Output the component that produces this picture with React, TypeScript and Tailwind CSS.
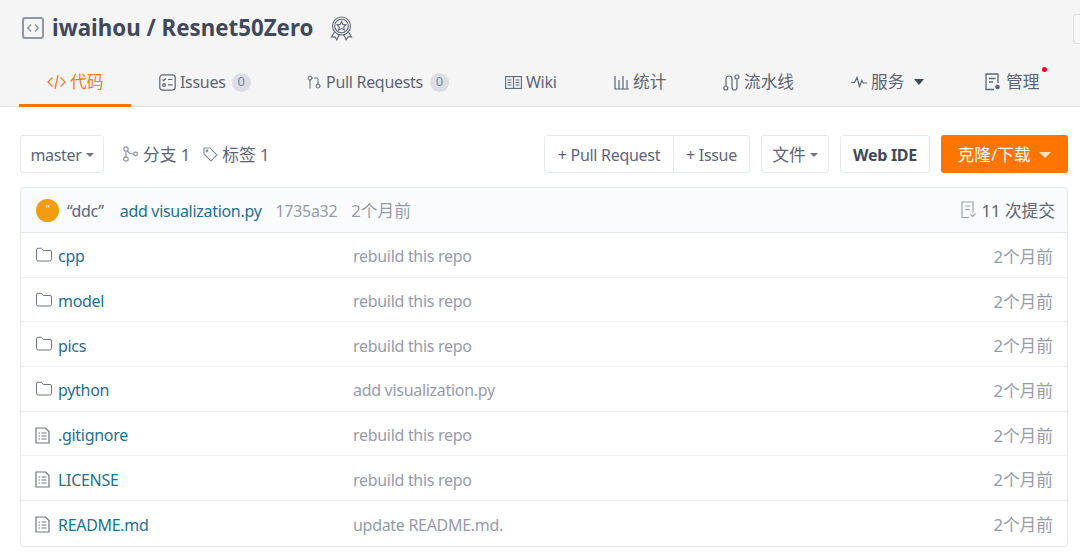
import React from 'react';
import { Folder, GitPullRequest } from 'lucide-react';

const base = "font-['Noto_Sans','Noto_Sans_CJK_SC',sans-serif]";

const Cn = ({ children }: { children: React.ReactNode }) => (
    <span className="text-[16.7px] tracking-normal whitespace-nowrap">{children}</span>
);

const RepoIcon = () => (
    <svg viewBox="0 0 22 22" className="w-[22px] h-[22px] text-[#8f96a6]" fill="none" stroke="currentColor">
        <rect x="1" y="1" width="20" height="20" rx="2" strokeWidth="2" />
        <path d="M9 7.500 5.800 11 9 14.500M13 7.500l3.200 3.500-3.200 3.500" strokeWidth="1.500" />
    </svg>
);

const BadgeIcon = () => (
    <svg viewBox="0 0 23 25" className="w-[23px] h-[25px] text-[#5e6577]" fill="none" stroke="currentColor" strokeWidth="1.100">
        <circle cx="11.500" cy="10" r="9" />
        <circle cx="11.500" cy="10" r="6.800" />
        <path d="M11.500 5.500l1.400 2.900 3.100.4-2.300 2.100.6 3.100-2.800-1.500-2.800 1.500.6-3.100-2.300-2.100 3.100-.4z" />
        <path d="M4.500 16 1.500 21l3.500-.2 1.800 3 2.500-5M18.500 16l3 5-3.500-.2-1.800 3-2.500-5" />
    </svg>
);

const CodeTabIcon = () => (
    <svg viewBox="0 0 19 16" className="w-[19px] h-[16px]" fill="none" stroke="currentColor" strokeWidth="1.300">
        <path d="M5.500 3.500 1 8l4.500 4.500M13.500 3.500 18 8l-4.500 4.500M11 1 8 15" />
    </svg>
);

const TaskIcon = () => (
    <svg viewBox="0 0 17 17" className="w-[17px] h-[17px]" fill="none" stroke="currentColor" strokeWidth="1.200">
        <rect x="0.800" y="0.800" width="15.400" height="15.400" rx="3" />
        <path d="M3.500 5.500l1.200 1.200 2-2.200M9 5.500h4.500M9 10.800h4.500" />
        <circle cx="5" cy="11" r="1.400" />
    </svg>
);

const BookIcon = () => (
    <svg viewBox="0 0 17 13" className="w-[17px] h-[13px]" fill="none" stroke="currentColor" strokeWidth="1.100">
        <rect x="0.600" y="0.600" width="15.800" height="11.800" />
        <path d="M8.500 1v11M2.500 4h4M2.500 6.500h4M2.500 9h4M10.500 4h4M10.500 6.500h4M10.500 9h4" />
    </svg>
);

const PipelineIcon = () => (
    <svg viewBox="0 0 17 17" className="w-[17px] h-[17px]" fill="none" stroke="currentColor" strokeWidth="1.200">
        <circle cx="2.800" cy="14" r="2" />
        <circle cx="14" cy="3" r="2" />
        <path d="M3 12V5a3 3 0 0 1 6 0v8.500a2.500 2.500 0 0 0 5 0V5.500" />
    </svg>
);

const PulseIcon = () => (
    <svg viewBox="0 0 16 12" className="w-[16px] h-[12px]" fill="none" stroke="currentColor" strokeWidth="1.200">
        <path d="M0 6.500h3.500L6 1.500l2.500 9 2.300-6 1.400 2.500H16" />
    </svg>
);

const StatsIcon = () => (
    <svg viewBox="0 0 15 15" className="w-[15px] h-[15px]" fill="none" stroke="currentColor" strokeWidth="1.200">
        <path d="M1 1v13h14M5 5v9M9 1v13M13 5v9" />
    </svg>
);

const ManageIcon = () => (
    <svg viewBox="0 0 16 18" className="w-[16px] h-[18px]" fill="none" stroke="currentColor" strokeWidth="1.300">
        <path d="M9 16.500H1V1h12v9" />
        <path d="M4 5.500h6.500M4 9h4" />
        <circle cx="12.500" cy="14" r="1.700" fill="currentColor" />
    </svg>
);

const BranchIcon = () => (
    <svg viewBox="0 0 15 16" className="w-[15px] h-[16px] text-[#8a90a0]" fill="none" stroke="currentColor" strokeWidth="1.200">
        <circle cx="3" cy="3" r="2.200" />
        <circle cx="3" cy="13" r="2.200" />
        <circle cx="12.500" cy="8" r="1.800" />
        <path d="M3 5.200v5.600M4.500 4.800C5.500 7 8 8 10.700 8" />
    </svg>
);

const TagIcon = () => (
    <svg viewBox="0 0 15 15" className="w-[15px] h-[15px] text-[#8a90a0]" fill="none" stroke="currentColor" strokeWidth="1.200">
        <path d="M1 1h6l7 7-6 6-7-7z" />
        <circle cx="4" cy="4" r="0.800" />
    </svg>
);

const FileIcon = () => (
    <svg viewBox="0 0 15 17" className="w-[15px] h-[17px] shrink-0" fill="none" stroke="#6f7480" strokeWidth="1.200">
        <path d="M1 1h9.500L14 4.500V16H1z" />
        <path d="M3.500 6h1.500M6.500 6h5M3.500 9h1.500M6.500 9h5M3.500 12h1.500M6.500 12h5" />
    </svg>
);

const CommitsIcon = () => (
    <svg viewBox="0 0 15 18" className="w-[15px] h-[18px]" fill="none" stroke="#9aa0ac" strokeWidth="1.200">
        <path d="M8 16.500H1V1h11v10.500" />
        <path d="M4 5h5M4 8.500h5" />
        <path d="M9.500 13.500l2 2 3-3" />
    </svg>
);

const Caret = ({ className }: { className: string }) => (
    <span className={`inline-block w-0 h-0 border-x-transparent border-b-0 ${className}`} />
);

const tabs = [
    { label: 'Issues', w: 'w-[147px]', icon: <TaskIcon />, count: 'ml-[2px]' },
    { label: 'Pull Requests', w: 'w-[199px]', icon: <GitPullRequest size={16} strokeWidth={1.500} />, count: 'ml-[3px]' },
    { label: 'Wiki', w: 'w-[109px]', icon: <BookIcon /> },
    { label: '统计', w: 'w-[109px]', icon: <StatsIcon />, cn: true },
    { label: '流水线', w: 'w-[128px]', icon: <PipelineIcon />, cn: true },
    { label: '服务', w: 'w-[134px]', icon: <PulseIcon />, cn: true, caret: true },
];

const rows = [
    { name: 'cpp', dir: true, msg: 'rebuild this repo' },
    { name: 'model', dir: true, msg: 'rebuild this repo' },
    { name: 'pics', dir: true, msg: 'rebuild this repo' },
    { name: 'python', dir: true, msg: 'add visualization.py' },
    { name: '.gitignore', dir: false, msg: 'rebuild this repo' },
    { name: 'LICENSE', dir: false, msg: 'rebuild this repo' },
    { name: 'README.md', dir: false, msg: 'update README.md.' },
];

export default function App() {
    return (
        <div className={`w-[1080px] h-[560px] overflow-hidden bg-white text-[16px] tracking-[-0.3px] ${base}`}>
            <div className="relative h-[107px] bg-[#f5f5f5] border-b border-[#e3e3e3]">
                <div className="flex items-center pl-[22px] pt-[17px] h-[39px] text-[#40485b]">
                    <RepoIcon />
                    <span className="ml-[8px] text-[22.300px] font-bold tracking-normal">iwaihou / Resnet50Zero</span>
                    <span className="ml-[17px]"><BadgeIcon /></span>
                </div>
                <div className="absolute right-[-8px] top-[14px] w-[15px] h-[30px] border border-[#dcdfe4] rounded-[3px] bg-[#f7f7f7]" />
                <div className="flex pl-[19px] pt-[24px] text-[#5e6577]">
                    <div className="w-[112px] h-[44px] pb-[3px] pl-[28px] flex items-center gap-[4px] text-[#fb7a27] border-b-[3px] border-[#ff7500]">
                        <CodeTabIcon />
                        <Cn>代码</Cn>
                    </div>
                    {tabs.map((t) => (
                        <div key={t.label} className={`${t.w} h-[38px] pl-[28px] flex items-center gap-[4px]`}>
                            {t.icon}
                            {t.cn ? <Cn>{t.label}</Cn> : <span className="whitespace-nowrap">{t.label}</span>}
                            {t.count && <span className={`${t.count} w-[19px] h-[19px] rounded-full bg-[#dcdee3] text-[#7a86a8] text-[13px] flex items-center justify-center`}>0</span>}
                            {t.caret && <Caret className="ml-[6px] border-x-[5px] border-t-[6px] border-t-[#40485b]" />}
                        </div>
                    ))}
                    <div className="relative h-[38px] pl-[28px] flex items-center gap-[5px]">
                        <ManageIcon />
                        <Cn>管理</Cn>
                        <span className="absolute right-[-8px] top-[4px] w-[5px] h-[5px] rounded-full bg-[#f5002b]" />
                    </div>
                </div>
            </div>

            <div className="px-[20px] pt-[28px] pr-[12px]">
                <div className="flex items-center h-[38px] text-[#5e6577]">
                    <div className="w-[84px] h-full pt-[2px] border border-[#e3e9ed] rounded-[3px] flex items-center justify-center gap-[4px]">
                        <span>master</span>
                        <Caret className="border-x-[4px] border-t-[4px] border-t-[#6b7280]" />
                    </div>
                    <span className="ml-[19px]"><BranchIcon /></span>
                    <span className="ml-[5px] pt-[1px]"><Cn>分支 1</Cn></span>
                    <span className="ml-[13px]"><TagIcon /></span>
                    <span className="ml-[4px] pt-[1px]"><Cn>标签 1</Cn></span>
                    <div className="ml-auto flex items-center h-full gap-[11px]">
                        <div className="flex h-full border border-[#e3e9ed] rounded-[3px]">
                            <div className="w-[129px] pt-[2px] flex items-center justify-center border-r border-[#e3e9ed]">+ Pull Request</div>
                            <div className="w-[75px] pt-[2px] flex items-center justify-center">+ Issue</div>
                        </div>
                        <div className="w-[68px] h-full pt-[2px] border border-[#e3e9ed] rounded-[3px] flex items-center justify-center gap-[4px]">
                            <Cn>文件</Cn>
                            <Caret className="border-x-[4px] border-t-[4px] border-t-[#6b7280]" />
                        </div>
                        <div className="w-[90px] h-full pt-[2px] border border-[#e3e9ed] rounded-[3px] flex items-center justify-center font-bold text-[#40485b]">Web IDE</div>
                        <div className="w-[127px] h-full pt-[2px] rounded-[3px] bg-[#ff7500] text-white flex items-center justify-center gap-[9px]">
                            <Cn>克隆/下载</Cn>
                            <Caret className="border-x-[6px] border-t-[6px] border-t-[#ffe0c2]" />
                        </div>
                    </div>
                </div>

                <div className="mt-[14px] border border-[#e3e9ed] rounded-[4px] overflow-hidden">
                    <div className="h-[45px] bg-[#fafbfc] border-b border-[#e3e9ed] flex items-center pl-[15px] pr-[12px] text-[#5e6577]">
                        <span className="w-[23px] h-[23px] rounded-full bg-[#f39c12] text-white text-[11px] leading-[20px] text-center">"</span>
                        <span className="ml-[8px] pt-[2px]">“ddc”</span>
                        <span className="ml-[16px] pt-[2px] text-[#1f6f8f]">add visualization.py</span>
                        <span className="ml-[14px] pt-[2px] text-[#969bab]">1735a32</span>
                        <span className="ml-[14px] pt-[2px] text-[#969bab]"><Cn>2个月前</Cn></span>
                        <span className="ml-auto flex items-center gap-[6px]">
                            <CommitsIcon />
                            <span className="pt-[2px]"><Cn>11 次提交</Cn></span>
                        </span>
                    </div>
                    {rows.map((r, i) => (
                        <div key={r.name} className={`h-[44.700px] pt-[3px] flex items-center pl-[14px] pr-[14px] ${i < rows.length - 1 ? 'border-b border-[#f0f2f5]' : ''}`}>
                            <div className="w-[318px] flex items-center gap-[6px] text-[#1f6f8f]">
                                {r.dir ? <Folder size={18} strokeWidth={1.200} className="text-[#5e6577] -mt-[3px] -mr-[1px]" /> : <FileIcon />}
                                <span className={r.dir ? '' : 'ml-[2px]'}>{r.name}</span>
                            </div>
                            <span className="text-[#969bab]">{r.msg}</span>
                            <span className="ml-auto text-[#969bab]"><Cn>2个月前</Cn></span>
                        </div>
                    ))}
                </div>
            </div>
        </div>
    );
}
